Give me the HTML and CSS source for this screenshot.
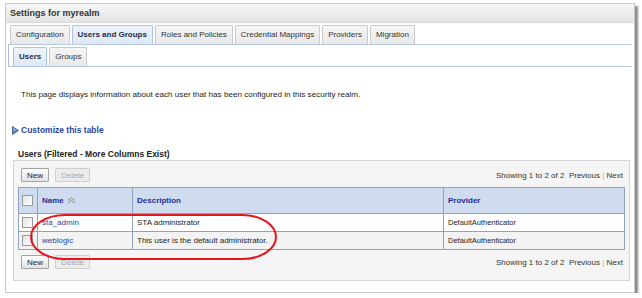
FILE: index.html
```html
<!DOCTYPE html>
<html lang="en">
<head>
  <meta charset="UTF-8" />
  <title>Settings for myrealm</title>
  <link rel="stylesheet" href="styles.css">
</head>
<body>

  <!-- Main settings panel -->
  <div class="panel">
    <div class="panel-title">Settings for myrealm</div>

    <div class="panel-body">
      <!-- Top level tabs -->
      <div class="tabs">
        <span class="tab">Configuration</span>
        <span class="tab active">Users and Groups</span>
        <span class="tab">Roles and Policies</span>
        <span class="tab">Credential Mappings</span>
        <span class="tab">Providers</span>
        <span class="tab">Migration</span>
      </div>

      <!-- Sub tabs -->
      <div class="subtabs">
        <span class="tab active">Users</span>
        <span class="tab">Groups</span>
      </div>

      <p class="intro">This page displays information about each user that has been configured in this security realm.</p>

      <div class="customize">
        <svg class="arrow" width="7" height="9" viewBox="0 0 7 9">
          <polygon points="0.5,0.5 6.5,4.5 0.5,8.5" fill="#5a7fb8" stroke="#3b5c94" stroke-width="0.8"/>
          <polygon points="1.5,2 4.5,4.5 1.5,4.5" fill="#b9cdea"/>
        </svg>
        <a href="#">Customize this table</a>
      </div>

      <div class="table-title">Users (Filtered - More Columns Exist)</div>

      <!-- Table box with buttons and pager -->
      <div class="table-box">
        <div class="toolbar">
          <div class="buttons">
            <button class="btn">New</button>
            <button class="btn disabled">Delete</button>
          </div>
          <div class="pager">Showing 1 to 2 of 2 &nbsp;Previous <span class="sep">|</span> Next</div>
        </div>

        <table class="users">
          <thead>
            <tr>
              <th class="col-check"><span class="checkbox"></span></th>
              <th class="col-name">Name
                <svg class="sort" width="9" height="7" viewBox="0 0 9 7">
                  <polyline points="1,3.5 4.5,0.8 8,3.5" fill="none" stroke="#8a8a8a" stroke-width="1"/>
                  <polyline points="1,6.2 4.5,3.5 8,6.2" fill="none" stroke="#8a8a8a" stroke-width="1"/>
                </svg>
              </th>
              <th class="col-desc">Description</th>
              <th>Provider</th>
            </tr>
          </thead>
          <tbody>
            <tr>
              <td class="col-check"><span class="checkbox"></span></td>
              <td><a href="#">sta_admin</a></td>
              <td>STA administrator</td>
              <td class="provider">DefaultAuthenticator</td>
            </tr>
            <tr class="alt">
              <td class="col-check"><span class="checkbox"></span></td>
              <td><a href="#">weblogic</a></td>
              <td>This user is the default administrator.</td>
              <td class="provider">DefaultAuthenticator</td>
            </tr>
          </tbody>
        </table>

        <div class="toolbar bottom">
          <div class="buttons">
            <button class="btn">New</button>
            <button class="btn disabled">Delete</button>
          </div>
          <div class="pager">Showing 1 to 2 of 2 &nbsp;Previous <span class="sep">|</span> Next</div>
        </div>
      </div>
    </div>

    <!-- Red highlight drawn over the user rows -->
    <svg class="highlight" width="250" height="50" viewBox="0 0 250 50">
      <rect x="2" y="2" width="245" height="44" rx="34" ry="22" fill="none" stroke="#e3161d" stroke-width="2"/>
    </svg>
  </div>

</body>
</html>
```

FILE: styles.css
```css
/* Page basics */
body {
  margin: 0;
  background: #fff;
  font-family: 'Liberation Sans', Arial, sans-serif;
  font-size: 8px;
  color: #222;
}

a {
  color: #2846a0;
  text-decoration: none;
}

/* Outer panel with drop shadow */
.panel {
  position: relative;
  margin: 3px 0 0 5px;
  width: 628px;
  height: 288px;
  border: 1px solid #c9c9c9;
  box-shadow: 3px 3px 2px #8a8a8a;
  background: #fff;
}

.panel-title {
  height: 18px;
  line-height: 18px;
  padding-left: 4px;
  font-size: 9px;
  font-weight: bold;
  color: #333;
  background: linear-gradient(to bottom, #f7f7f7, #e4e4e4);
  border-bottom: 1px solid #d9d9d9;
}

.panel-body {
  padding: 0 2px;
}

/* Tabs */
.tabs {
  display: flex;
  gap: 2px;
  padding: 2px 0 0 2px;
  border-bottom: 1px solid #b6c9e3;
}

.tab {
  height: 18px;
  line-height: 18px;
  padding: 0 5px;
  border: 1px solid #c9c9c9;
  border-bottom: none;
  border-radius: 2px 2px 0 0;
  background: linear-gradient(to bottom, #f6f6f6, #e8e8e8);
  color: #333;
}

.tab.active {
  font-weight: bold;
  color: #1d2d4d;
  border-color: #aec3df;
  background: linear-gradient(to bottom, #eef3fa, #dde8f5);
}

.subtabs {
  display: flex;
  gap: 2px;
  padding: 2px 0 0 4px;
  border-left: 1px solid #a8bfdd;
  border-bottom: 1px solid #b6c9e3;
}

.intro {
  margin: 22px 0 0 13px;
  line-height: 12px;
  font-size: 8.1px;
}

.customize {
  display: flex;
  align-items: center;
  gap: 2px;
  margin: 23px 0 0 4px;
  line-height: 12px;
  font-weight: bold;
  font-size: 8.5px;
}

.table-title {
  margin: 12px 0 0 10px;
  line-height: 12px;
  font-weight: bold;
  font-size: 8.5px;
  color: #222;
}

/* Gray box around the table */
.table-box {
  margin: 0 2px 0 5px;
  padding: 7px 4px 11px 4px;
  background: #f5f5f5;
  border: 1px solid #d6d6d6;
}

.toolbar {
  display: flex;
  justify-content: space-between;
  align-items: center;
  padding: 0 2px 0 3px;
  margin-bottom: 5px;
}

.toolbar.bottom {
  margin: 5px 0 0;
}

.buttons {
  display: flex;
  gap: 6px;
}

.btn {
  height: 14px;
  padding: 0 5px;
  font-family: inherit;
  font-size: 8px;
  color: #222;
  border: 1px solid #a4a4a4;
  border-radius: 1px;
  background: linear-gradient(to bottom, #ffffff, #e2e2e2);
}

.btn.disabled {
  color: #a9a9a9;
  border-color: #cfcfcf;
  background: #ececec;
}

.pager {
  color: #333;
}

.pager .sep {
  color: #b0b0b0;
}

/* Users table */
.users {
  width: 100%;
  border-collapse: collapse;
  border: 1px solid #8ea2c2;
  background: #fff;
}

.users th {
  height: 25px;
  text-align: left;
  padding: 0 4px;
  font-weight: bold;
  color: #1f2d92;
  background: #cfdcef;
  border-left: 1px solid #8ea2c2;
}

.users td {
  height: 17px;
  padding: 0 4px;
  border-left: 1px solid #8ea2c2;
  border-top: 1px solid #8ea2c2;
}

.users tr.alt td {
  background: #f3f3f3;
}

.users .col-check {
  width: 11px;
  padding: 0 4px 0 3px;
}

.users .col-name {
  width: 86px;
}

.users .col-desc {
  width: 302px;
}

.users .provider {
  font-size: 7.5px;
}

.sort {
  vertical-align: middle;
  margin-left: 1px;
}

.checkbox {
  display: block;
  width: 9px;
  height: 9px;
  border: 1px solid #9a9a9a;
  background: linear-gradient(to bottom right, #e4e4e4, #ffffff);
}

/* Red highlight over the rows */
.highlight {
  position: absolute;
  left: 23px;
  top: 209px;
}
```
